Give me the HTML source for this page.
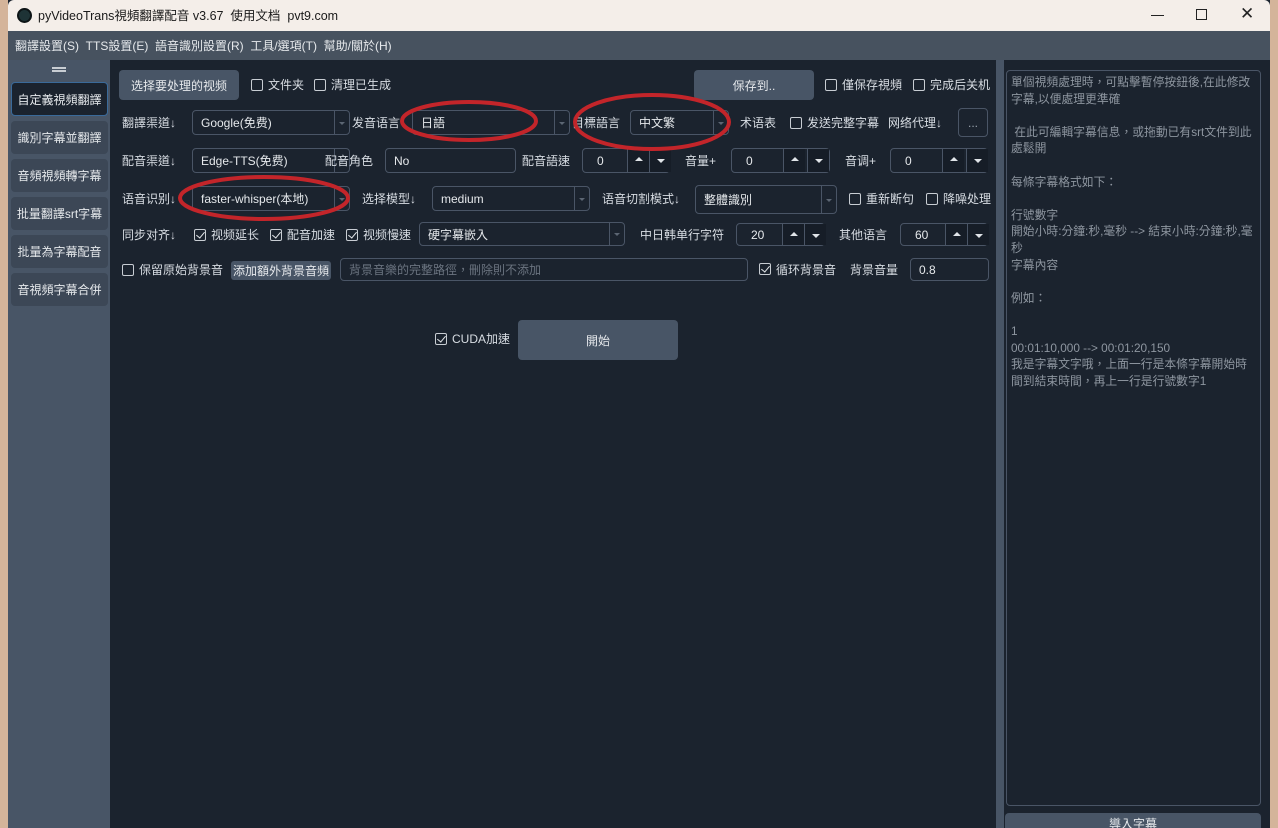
<!DOCTYPE html>
<html><head><meta charset="utf-8"><style>
*{box-sizing:border-box;margin:0;padding:0}
html,body{width:1278px;height:828px;overflow:hidden}
body{background:#d4b49a;font-family:"Liberation Sans","Noto Sans CJK TC",sans-serif;font-size:12px;color:#d8dde3;position:relative}
.a{position:absolute;white-space:nowrap}
.t{position:absolute;white-space:nowrap;line-height:16px}
.box{position:absolute;border:1px solid #4a5566;border-radius:4px;background:#1b232e;color:#e6e9ec;padding-left:8px;display:flex;align-items:center}
.combo:after{content:"";position:absolute;right:0;top:0;bottom:0;width:14px;border-left:1px solid #4a5566}
.combo:before{content:"";position:absolute;right:4px;top:50%;margin-top:-1px;border:3px solid transparent;border-top:3px solid #5c6673}
.spin .up,.spin .dn{position:absolute;top:0;bottom:0;width:22px;border-left:1px solid #4a5566;background:#161d27}
.spin .up:after{content:"";position:absolute;left:7px;top:8px;border:4px solid transparent;border-bottom:4px solid #e0e4e8;border-top:0}
.spin .dn:after{content:"";position:absolute;left:7px;top:10px;border:4px solid transparent;border-top:4px solid #e0e4e8;border-bottom:0}
.btn{position:absolute;background:#485566;border-radius:4px;color:#e6e9ec;display:flex;align-items:center;justify-content:center}
.cb{position:absolute;width:12px;height:12px;border:1px solid #c8cdd3;border-radius:2px}
.cb.on:after{content:"";position:absolute;left:3px;top:0px;width:4px;height:7px;border:solid #e6e9ec;border-width:0 1.5px 1.5px 0;transform:rotate(40deg)}
.side{position:absolute;left:11px;width:97px;height:33px;background:#3c4756;border-radius:4px;color:#e6e9ec;display:flex;align-items:center;justify-content:center;font-size:12px}
</style></head><body>
<div class="a" style="left:8px;top:0;width:1262px;height:828px;background:#1b232e"></div>
<div class="a" style="left:8px;top:0;width:1262px;height:31px;background:#f4eee9;border-radius:6px 6px 0 0"></div>
<div class="a" style="left:17px;top:8px;width:15px;height:15px;border-radius:50%;background:#1e3336;border:2px solid #0d1416"></div>
<div class="t" style="left:38px;top:8px;color:#1a1a1a;font-size:12.5px">pyVideoTrans視頻翻譯配音 v3.67&nbsp; 使用文档&nbsp; pvt9.com</div>
<div class="a" style="left:1151px;top:15px;width:13px;height:1px;background:#222"></div>
<div class="a" style="left:1196px;top:9px;width:11px;height:11px;border:1.3px solid #222"></div>
<div class="t" style="left:1240px;top:6px;color:#222;font-size:17px">✕</div>
<div class="a" style="left:8px;top:31px;width:1262px;height:29px;background:#47525f"></div>
<div class="t" style="left:15px;top:38px;color:#e6e9ec">翻譯設置(S)&nbsp; TTS設置(E)&nbsp; 語音識別設置(R)&nbsp; 工具/選項(T)&nbsp; 幫助/關於(H)</div>
<div class="a" style="left:8px;top:60px;width:102px;height:768px;background:#485566"></div>
<div class="a" style="left:52px;top:67px;width:14px;height:5px;border-top:2px solid #c8cdd3;border-bottom:2px solid #c8cdd3"></div>
<div class="side" style="top:82px;height:34px;background:#1b232e;border:1px solid #3a6a9a">自定義視頻翻譯</div>
<div class="side" style="top:121px">識別字幕並翻譯</div>
<div class="side" style="top:159px">音頻視頻轉字幕</div>
<div class="side" style="top:197px">批量翻譯srt字幕</div>
<div class="side" style="top:235px">批量為字幕配音</div>
<div class="side" style="top:273px">音視頻字幕合併</div>
<div class="a" style="left:996px;top:60px;width:8px;height:768px;background:#485566"></div>
<div class="btn" style="left:119px;top:70px;width:120px;height:30px">选择要处理的视频</div>
<div class="cb" style="left:251px;top:79px"></div><div class="t" style="left:268px;top:77px">文件夹</div>
<div class="cb" style="left:314px;top:79px"></div><div class="t" style="left:331px;top:77px">清理已生成</div>
<div class="btn" style="left:694px;top:70px;width:120px;height:30px">保存到..</div>
<div class="cb" style="left:825px;top:79px"></div><div class="t" style="left:842px;top:77px">僅保存視頻</div>
<div class="cb" style="left:913px;top:79px"></div><div class="t" style="left:930px;top:77px">完成后关机</div>

<div class="t" style="left:122px;top:115px">翻譯渠道↓</div>
<div class="box combo" style="left:192px;top:110px;width:158px;height:25px">Google(免费)</div>
<div class="t" style="left:352px;top:115px">发音语言</div>
<div class="box combo" style="left:412px;top:110px;width:158px;height:25px">日語</div>
<div class="t" style="left:572px;top:115px">目標語言</div>
<div class="box combo" style="left:630px;top:110px;width:99px;height:25px">中文繁</div>
<div class="t" style="left:740px;top:115px">术语表</div>
<div class="cb" style="left:790px;top:117px"></div><div class="t" style="left:807px;top:115px">发送完整字幕</div>
<div class="t" style="left:888px;top:115px">网络代理↓</div>
<div class="box" style="left:958px;top:108px;width:30px;height:29px;justify-content:center;padding:0;color:#9aa3ad">...</div>

<div class="t" style="left:122px;top:153px">配音渠道↓</div>
<div class="box combo" style="left:192px;top:148px;width:158px;height:25px">Edge-TTS(免费)</div>
<div class="t" style="left:325px;top:153px">配音角色</div>
<div class="box" style="left:385px;top:148px;width:131px;height:25px">No</div>
<div class="t" style="left:522px;top:153px">配音語速</div>
<div class="box spin" style="left:582px;top:148px;width:88px;height:25px;padding-left:14px">0<span class="up" style="left:44px"></span><span class="dn" style="left:66px"></span></div>
<div class="t" style="left:685px;top:153px">音量+</div>
<div class="box spin" style="left:731px;top:148px;width:99px;height:25px;padding-left:14px">0<span class="up" style="left:51px"></span><span class="dn" style="left:75px"></span></div>
<div class="t" style="left:845px;top:153px">音调+</div>
<div class="box spin" style="left:890px;top:148px;width:98px;height:25px;padding-left:14px">0<span class="up" style="left:51px"></span><span class="dn" style="left:75px"></span></div>

<div class="t" style="left:122px;top:191px">语音识别↓</div>
<div class="box combo" style="left:192px;top:186px;width:158px;height:25px">faster-whisper(本地)</div>
<div class="t" style="left:362px;top:191px">选择模型↓</div>
<div class="box combo" style="left:432px;top:186px;width:158px;height:25px">medium</div>
<div class="t" style="left:602px;top:191px">语音切割模式↓</div>
<div class="box combo" style="left:695px;top:185px;width:142px;height:29px">整體識別</div>
<div class="cb" style="left:849px;top:193px"></div><div class="t" style="left:866px;top:191px">重新断句</div>
<div class="cb" style="left:926px;top:193px"></div><div class="t" style="left:943px;top:191px">降噪处理</div>

<div class="t" style="left:122px;top:227px">同步对齐↓</div>
<div class="cb on" style="left:194px;top:229px"></div><div class="t" style="left:211px;top:227px">视频延长</div>
<div class="cb on" style="left:270px;top:229px"></div><div class="t" style="left:287px;top:227px">配音加速</div>
<div class="cb on" style="left:346px;top:229px"></div><div class="t" style="left:363px;top:227px">视频慢速</div>
<div class="box combo" style="left:419px;top:222px;width:206px;height:24px">硬字幕嵌入</div>
<div class="t" style="left:640px;top:227px">中日韩单行字符</div>
<div class="box spin" style="left:736px;top:223px;width:89px;height:23px;padding-left:14px">20<span class="up" style="left:45px"></span><span class="dn" style="left:67px"></span></div>
<div class="t" style="left:839px;top:227px">其他语言</div>
<div class="box spin" style="left:900px;top:223px;width:88px;height:23px;padding-left:14px">60<span class="up" style="left:44px"></span><span class="dn" style="left:66px"></span></div>

<div class="cb" style="left:122px;top:264px"></div><div class="t" style="left:139px;top:262px">保留原始背景音</div>
<div class="btn" style="left:231px;top:261px;width:100px;height:19px;border-radius:3px">添加額外背景音頻</div>
<div class="box" style="left:340px;top:258px;width:408px;height:23px;color:#6b7480">背景音樂的完整路徑，刪除則不添加</div>
<div class="cb on" style="left:759px;top:263px"></div><div class="t" style="left:776px;top:262px">循环背景音</div>
<div class="t" style="left:850px;top:262px">背景音量</div>
<div class="box" style="left:910px;top:258px;width:79px;height:23px">0.8</div>

<div class="cb on" style="left:435px;top:333px"></div><div class="t" style="left:452px;top:331px">CUDA加速</div>
<div class="btn" style="left:518px;top:320px;width:160px;height:40px">開始</div>

<div class="a" style="left:1006px;top:70px;width:255px;height:736px;border:1px solid #4a5566;border-radius:4px"></div>
<div class="a" style="left:1011px;top:74px;width:247px;white-space:normal;line-height:16.6px;color:#8e96a0;font-size:11.8px">單個視頻處理時，可點擊暫停按鈕後,在此修改字幕,以便處理更準確<br><br>&nbsp;在此可編輯字幕信息，或拖動已有srt文件到此處鬆開<br><br>每條字幕格式如下：<br><br>行號數字<br>開始小時:分鐘:秒,毫秒 --&gt; 結束小時:分鐘:秒,毫秒<br>字幕內容<br><br>例如：<br><br>1<br>00:01:10,000 --&gt; 00:01:20,150<br>我是字幕文字哦，上面一行是本條字幕開始時間到結束時間，再上一行是行號數字1</div>
<div class="btn" style="left:1005px;top:813px;width:256px;height:20px;align-items:flex-start;padding-top:2px">導入字幕</div>

<svg class="a" style="left:0;top:0" width="1278" height="828">
<g fill="none" stroke="#c3252a" stroke-width="4">
<ellipse cx="469" cy="121" rx="67" ry="19"/>
<ellipse cx="652" cy="122" rx="77" ry="27"/>
<ellipse cx="264" cy="198" rx="84" ry="21"/>
</g></svg>
</body></html>
